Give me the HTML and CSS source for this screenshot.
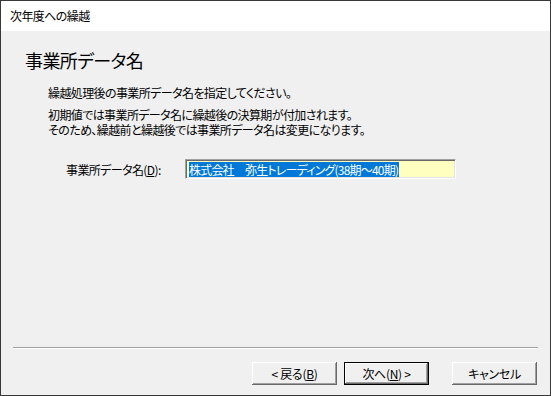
FILE: index.html
```html
<!DOCTYPE html>
<html lang="ja">
  <head>
    <meta charset="UTF-8" />
    <title>次年度への繰越</title>
    <link rel="stylesheet" href="styles.css">
  </head>
  <body>
    <div class="window">
      <div class="titlebar">次年度への繰越</div>

      <div class="content">
        <h1>事業所データ名</h1>

        <div class="desc">
          <p>繰越処理後の事業所データ名を指定してください。</p>
          <p>初期値では事業所データ名に繰越後の決算期が付加されます。<br />そのため、繰越前と繰越後では事業所データ名は変更になります。</p>
        </div>

        <!-- data name field -->
        <div class="field">
          <label for="dataName">事業所データ名(<u>D</u>):</label>
          <div class="input">
            <span class="selected">株式会社　弥生トレーディング(38期〜40期)</span>
          </div>
        </div>
      </div>

      <div class="footer">
        <div class="separator"></div>
        <div class="buttons">
          <button>&lt; 戻る(<u>B</u>)</button>
          <button class="default">次へ(<u>N</u>) &gt;</button>
          <button class="cancel">キャンセル</button>
        </div>
      </div>
    </div>
  </body>
</html>
```

FILE: styles.css
```css
body {
  margin: 0;
  font-family: "Noto Sans CJK JP", "Noto Sans", sans-serif;
  font-size: 12px;
  font-feature-settings: "palt";
  letter-spacing: -0.6px;
  color: #000;
}

.window {
  width: 551px;
  height: 396px;
  box-sizing: border-box;
  border: 1px solid #383838;
  background: #f0f0f0;
  display: flex;
  flex-direction: column;
}

.titlebar {
  height: 30px;
  line-height: 30px;
  padding-left: 9px;
  background: #fff;
  color: #000;
}

.content {
  flex: 1;
  padding: 19px 0 0 24px;
}

h1 {
  margin: 0;
  font-size: 18px;
  font-weight: normal;
  line-height: 20px;
  letter-spacing: -0.6px;
}

.desc {
  margin: 15px 0 0 23px;
  line-height: 15px;
}

.desc p {
  margin: 0 0 7px;
}

.desc p:last-child {
  margin-bottom: 0;
}

.field {
  display: flex;
  align-items: center;
  margin: 22px 0 0 41px;
}

.field label {
  width: 119px;
}

.field u,
.buttons u {
  text-decoration: underline;
  text-underline-offset: 1px;
}

.input {
  width: 271px;
  height: 20px;
  box-sizing: border-box;
  border-top: 1px solid #a0a0a0;
  border-left: 1px solid #a0a0a0;
  border-right: 1px solid #fff;
  border-bottom: 1px solid #fff;
  box-shadow: inset 1px 1px 0 #696969, inset -1px -1px 0 #e3e3e3;
  background: #ffffc0;
  padding: 2px 0 0 3px;
  display: flex;
}

.selected {
  background: #0078d7;
  color: #fff;
  line-height: 15px;
  height: 15px;
  padding-right: 1px;
  letter-spacing: -0.8px;
}

.footer {
  padding: 0 12px 10px 12px;
}

.separator {
  border-top: 1px solid #a0a0a0;
  border-bottom: 1px solid #fff;
  margin-bottom: 13px;
}

.buttons {
  display: flex;
  justify-content: flex-end;
  padding-right: 1px;
}

button {
  width: 85px;
  height: 23px;
  margin-left: 7px;
  padding: 0;
  font-family: inherit;
  font-size: 12px;
  font-feature-settings: "palt";
  letter-spacing: -0.3px;
  color: #000;
  background: #f0f0f0;
  border: none;
  box-shadow: inset -1px -1px 0 #696969, inset 1px 1px 0 #fff, inset -2px -2px 0 #a0a0a0;
}

button.default {
  border: 1px solid #000;
}

button.cancel {
  margin-left: 23px;
}
```
